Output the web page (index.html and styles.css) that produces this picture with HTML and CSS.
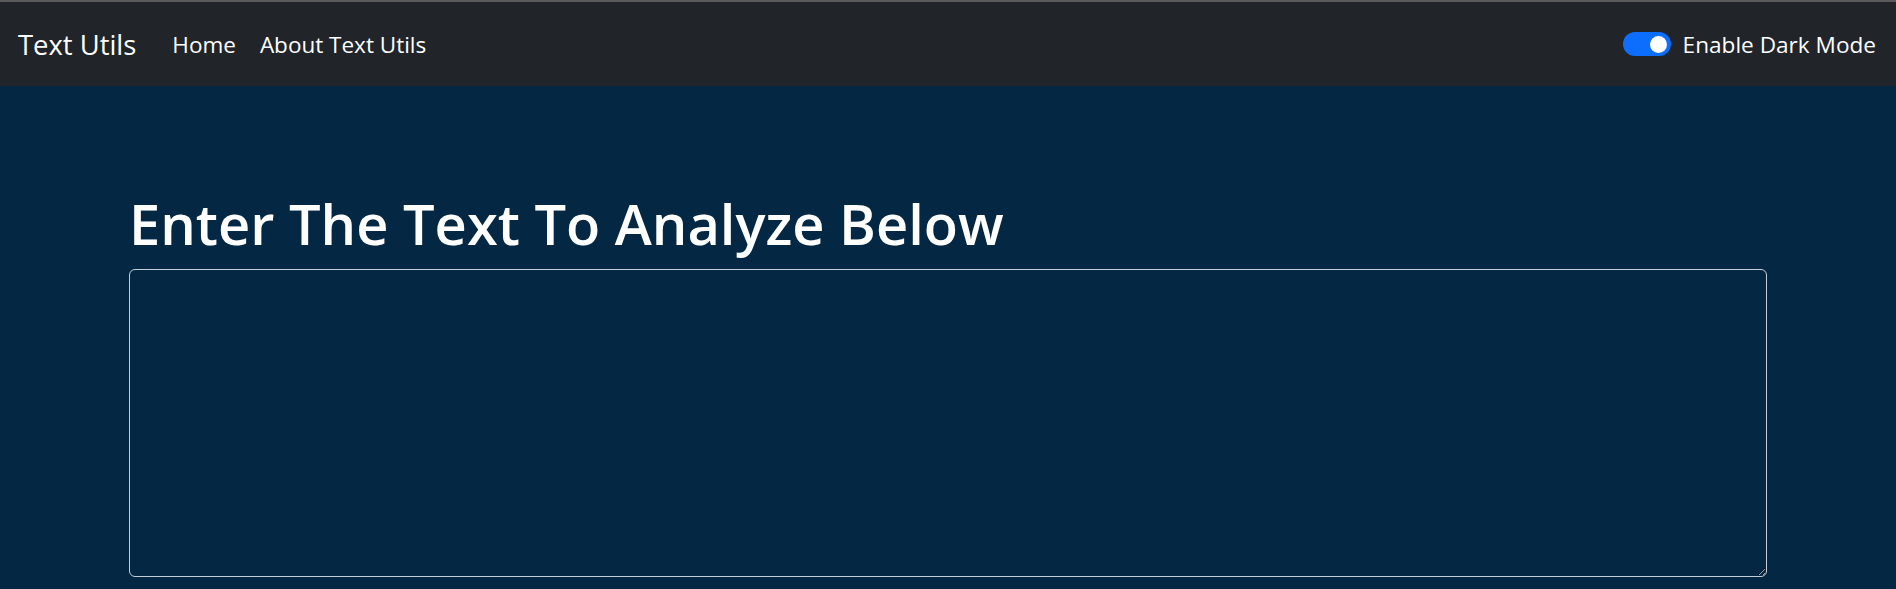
FILE: index.html
```html
<!DOCTYPE html>
<html lang="en">
<head>
<meta charset="utf-8">
<title>Text Utils</title>
<link rel="stylesheet" href="styles.css">
</head>
<body>
<div class="topline"></div>
<nav class="navbar">
  <a class="brand" href="#">Text Utils</a>
  <ul class="links">
    <li><a href="#">Home</a></li>
    <li><a href="#">About Text Utils</a></li>
  </ul>
  <label class="switch">
    <span class="track"><span class="knob"></span></span>
    <span class="switch-label">Enable Dark Mode</span>
  </label>
</nav>
<main class="container">
  <h1 class="title">Enter The Text To Analyze Below</h1>
  <textarea class="box" rows="8"></textarea>
</main>
</body>
</html>
```

FILE: styles.css
```css
html, body {
  margin: 0;
  padding: 0;
}
body {
  background: #042743;
  font-family: "Open Sans", "Noto Sans", sans-serif;
  color: #fff;
  height: 589px;
  overflow: hidden;
}
.topline {
  height: 2px;
  background: #5b5b5b;
}
.navbar {
  height: 84px;
  background: #212529;
  display: flex;
  align-items: center;
  padding: 0 20px 0 18px;
  box-sizing: border-box;
}
.brand {
  color: #fff;
  text-decoration: none;
  font-size: 27.4px;
  margin-right: 24px;
  line-height: 1;
  position: relative;
  top: 1px;
}
.links {
  list-style: none;
  margin: 0;
  padding: 0;
  display: flex;
  flex: 1;
}
.links a {
  display: block;
  color: #fff;
  text-decoration: none;
  font-size: 22.5px;
  padding: 0 12px;
}
.switch {
  display: flex;
  align-items: center;
  gap: 12px;
}
.track {
  width: 48px;
  height: 24px;
  border-radius: 12px;
  background: #0d6efd;
  display: flex;
  align-items: center;
  justify-content: flex-end;
  padding: 0 4px;
  box-sizing: border-box;
}
.knob {
  width: 17px;
  height: 17px;
  border-radius: 50%;
  background: #fff;
}
.switch-label {
  font-size: 22.6px;
}
.container {
  padding: 104px 129px 0;
}
.title {
  font-size: 56px;
  font-weight: 600;
  line-height: 67px;
  margin: 0 0 12px 0;
}
.box {
  display: block;
  width: 100%;
  height: 308px;
  box-sizing: border-box;
  background: #042743;
  border: 1px solid #c5ced8;
  border-radius: 6px;
  color: #fff;
  font-family: inherit;
  font-size: 22px;
  padding: 9px 18px;
}
```
